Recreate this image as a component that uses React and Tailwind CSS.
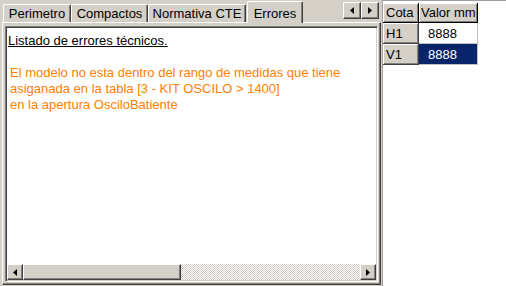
import React from "react";

const tabs = [
  { label: "Perimetro", w: "w-[68px]" },
  { label: "Compactos", w: "w-[77px]" },
  { label: "Normativa CTE", w: "w-[98px]" },
];

const raised =
  "bg-[#d4d0c8] border-t border-l border-r border-b border-t-white border-l-white border-r-[#404040] border-b-[#404040] shadow-[inset_-1px_-1px_0_#808080]";

function Arrow({ dir }) {
  return (
    <svg width="4" height="7" viewBox="0 0 4 7">
      {dir === "left" ? <path d="M4 0 L4 7 L0 3.5 Z" fill="#000" /> : <path d="M0 0 L0 7 L4 3.5 Z" fill="#000" />}
    </svg>
  );
}

function ScrollButton({ dir, className = "" }) {
  return (
    <div className={`w-[16px] h-[16px] flex items-center justify-center ${raised} ${className}`}>
      <Arrow dir={dir} />
    </div>
  );
}

export default function App() {
  return (
    <div className="w-[506px] h-[286px] bg-[#d4d0c8] flex overflow-hidden font-['Liberation_Sans',Arial,sans-serif] text-[13px] leading-none text-black">
      {/* Tab control */}
      <div className="w-[381px] h-full flex flex-col">
        {/* Tab strip */}
        <div className="h-[22px] flex items-end pl-[3px]">
          {tabs.map((t) => (
            <div
              key={t.label}
              className={`${t.w} h-[18px] flex items-center justify-center border-t border-l border-r border-t-white border-l-white border-r-[#404040] shadow-[inset_-1px_0_0_#808080] rounded-t-[2px]`}
            >
              {t.label}
            </div>
          ))}
          <div className="relative z-10 ml-px w-[56px] h-[22px] -mb-px bg-[#d4d0c8] flex items-start justify-center pt-[5px] border-t border-l border-r border-t-white border-l-white border-r-[#404040] shadow-[inset_-1px_0_0_#808080] rounded-t-[2px]">
            Errores
          </div>
          <div className="ml-auto self-start mt-[2px] mr-[2px] flex">
            <div className={`w-[18px] h-[17px] flex items-center justify-center ${raised}`}>
              <Arrow dir="left" />
            </div>
            <div className={`w-[18px] h-[17px] flex items-center justify-center ${raised}`}>
              <Arrow dir="right" />
            </div>
          </div>
        </div>

        {/* Tab page */}
        <div className="flex-1 ml-[2px] mb-px flex border-t border-l border-r border-b border-t-white border-l-white border-r-[#404040] border-b-[#404040] shadow-[inset_-1px_-1px_0_#808080] pl-[2px] pt-[3px] pr-[2px] pb-[2px]">
          {/* Memo */}
          <div className="flex-1 flex flex-col bg-white border-t border-l border-r border-b border-t-[#808080] border-l-[#808080] border-r-white border-b-white shadow-[inset_1px_1px_0_#404040,inset_-1px_-1px_0_#d4d0c8] p-px">
            <div className="flex-1 pl-px pt-[5px] leading-[16px]">
              <div className="underline">Listado de errores técnicos.</div>
              <div className="h-[16px]" />
              <div className="text-[#ff8000] pl-[2px]">
                <div>El modelo no esta dentro del rango de medidas que tiene</div>
                <div>asiganada en la tabla [3 - KIT OSCILO &gt; 1400]</div>
                <div>en la apertura OsciloBatiente</div>
              </div>
            </div>
            {/* Horizontal scrollbar */}
            <div className="h-[16px] flex">
              <ScrollButton dir="left" />
              <div className={`w-[158px] h-[16px] ${raised}`} />
              <div className="flex-1 h-[16px] bg-[repeating-conic-gradient(#d4d0c8_0_25%,#ffffff_0_50%)] bg-[length:2px_2px]" />
              <ScrollButton dir="right" />
            </div>
          </div>
        </div>
      </div>

      {/* Grid panel */}
      <div className="flex-1 h-full pl-px">
        <div className="h-full bg-white border-l border-t border-[#a0a0a0] pt-[2px]">
          <div className="grid grid-cols-[36px_59px]">
            <div className="h-[20px] flex items-center pl-[3px] bg-[#d4d0c8] border-r border-b border-black shadow-[inset_1px_1px_0_#fff,inset_-1px_-1px_0_#808080]">
              Cota
            </div>
            <div className="h-[20px] flex items-center pl-[2px] bg-[#d4d0c8] border-r border-b border-black shadow-[inset_1px_1px_0_#fff,inset_-1px_-1px_0_#808080]">
              Valor mm
            </div>

            <div className="h-[21px] flex items-center pl-[3px] bg-[#d4d0c8] border-r border-b border-[#404040] shadow-[inset_1px_1px_0_#fff,inset_-1px_-1px_0_#808080]">
              H1
            </div>
            <div className="h-[21px] flex items-center pl-[9px] bg-white border-r border-b border-[#c0c0c0]">
              8888
            </div>

            <div className="h-[21px] flex items-center pl-[3px] bg-[#d4d0c8] border-r border-b border-[#404040] shadow-[inset_1px_1px_0_#fff,inset_-1px_-1px_0_#808080]">
              V1
            </div>
            <div className="h-[21px] flex items-center pl-[9px] bg-[#0a246a] text-white border-r border-b border-[#c0c0c0]">
              8888
            </div>
          </div>
        </div>
      </div>
    </div>
  );
}
